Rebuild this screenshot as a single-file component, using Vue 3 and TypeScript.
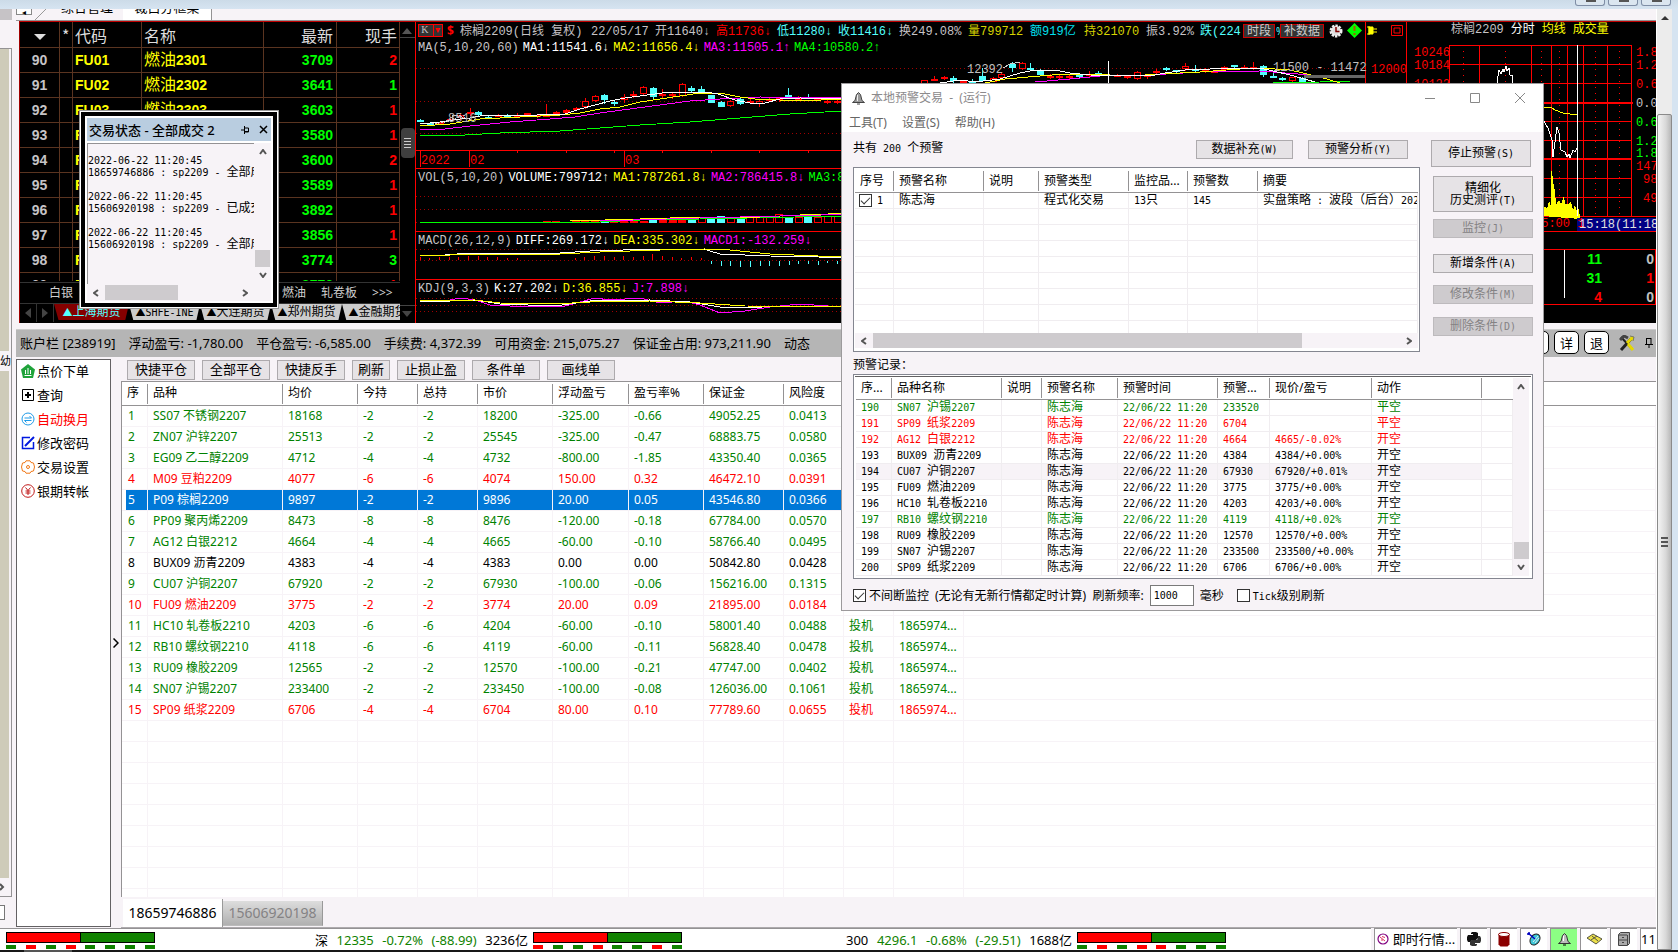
<script setup lang="ts">
import { h, ref } from 'vue'

/* Text that mixes Latin and Han: the Latin runs are monospaced */
const Mx = (props: { t: string }) =>
  h(
    'span',
    { class: 'mx' },
    (props.t.match(/[\u2e80-\uffef]+|[^\u2e80-\uffef]+/g) ?? []).map((s) =>
      /[\u2e80-\uffef]/.test(s) ? h('span', { class: 'han' }, s) : s,
    ),
  )
Mx.props = ['t']

const quotes = [
  ['90', 'FU01', '燃油', '2301', '3709', '2', 'r'],
  ['91', 'FU02', '燃油', '2302', '3641', '1', 'g'],
  ['92', 'FU03', '燃油', '2303', '3603', '1', 'r'],
  ['93', 'F', '', '', '3580', '1', 'r'],
  ['94', 'F', '', '', '3600', '2', 'r'],
  ['95', 'F', '', '', '3589', '1', 'r'],
  ['96', 'F', '', '', '3892', '1', 'r'],
  ['97', 'F', '', '', '3856', '1', 'r'],
  ['98', 'F', '', '', '3774', '3', 'g'],
  ['99', 'F', '', '', '3776', '1', 'r'],
]

const barItems = [
  ['棕榈2209(日线 复权)', 'gray'],
  ['22/05/17', 'gray'],
  ['开11640↓', 'gray'],
  ['高11736↓', 'red'],
  ['低11280↓', 'cyan'],
  ['收11416↓', 'cyan'],
  ['换249.08%', 'gray'],
  ['量799712', 'gold'],
  ['额919亿', 'sky'],
  ['持321070', 'gold'],
  ['振3.92%', 'gray'],
  ['跌(224', 'cyan'],
]

const legends = [
  { cls: 'p-main', items: [['MA(5,10,20,60)', 'gray'], ['MA1:11541.6↓', 'white'], ['MA2:11656.4↓', 'yellow'], ['MA3:11505.1↑', 'magenta'], ['MA4:10580.2↑', 'lime']] },
  { cls: 'p-vol', items: [['VOL(5,10,20)', 'gray'], ['VOLUME:799712↑', 'white'], ['MA1:787261.8↓', 'yellow'], ['MA2:786415.8↓', 'magenta'], ['MA3:8', 'lime']] },
  { cls: 'p-macd', items: [['MACD(26,12,9)', 'gray'], ['DIFF:269.172↓', 'white'], ['DEA:335.302↓', 'yellow'], ['MACD1:-132.259↓', 'magenta']] },
  { cls: 'p-kdj', items: [['KDJ(9,3,3)', 'gray'], ['K:27.202↓', 'white'], ['D:36.855↓', 'yellow'], ['J:7.898↓', 'magenta']] },
]

/* candle: x, body top, body bottom, wick top, wick bottom, kind (c cyan, s red solid, h red hollow) */
type Candle = [number, number, number, number, number, string]
const candles: Candle[] = [
  [420, 120, 122, 119, 122, 'c'], [430, 123, 124, 122, 125, 'c'], [440, 122, 123, 121, 124, 's'], [450, 119, 121, 117, 122, 's'],
  [460, 115, 118, 114, 120, 'h'], [470, 112, 114, 108, 116, 's'], [478, 112, 115, 111, 117, 'c'], [488, 117, 118, 116, 119, 'c'],
  [498, 115, 116, 114, 117, 's'], [507, 116, 117, 114, 118, 'c'], [517, 115, 116, 113, 117, 's'], [527, 113, 115, 113, 116, 's'],
  [537, 115, 116, 114, 118, 's'], [546, 115, 116, 104, 116, 's'], [556, 112, 115, 111, 115, 's'], [566, 110, 113, 109, 114, 's'],
  [576, 108, 109, 107, 110, 's'], [585, 101, 107, 98, 109, 'h'], [595, 96, 101, 95, 102, 'h'], [604, 95, 100, 94, 104, 'c'],
  [614, 102, 103, 100, 106, 'c'], [624, 97, 100, 94, 103, 'h'], [633, 94, 95, 91, 98, 's'], [643, 87, 94, 86, 95, 'h'],
  [653, 88, 97, 87, 100, 'c'], [662, 94, 95, 89, 98, 's'], [672, 94, 95, 92, 99, 's'], [682, 84, 96, 83, 97, 'h'],
  [691, 88, 91, 86, 93, 'c'], [701, 89, 93, 86, 94, 'c'], [711, 95, 103, 95, 103, 'c'], [721, 102, 107, 101, 107, 'c'],
  [730, 101, 106, 100, 107, 'h'], [740, 99, 104, 98, 105, 'c'], [750, 101, 102, 98, 104, 's'], [759, 101, 104, 100, 107, 'h'],
  [769, 99, 101, 98, 102, 's'], [779, 98, 99, 97, 102, 's'], [788, 95, 97, 88, 98, 'c'], [798, 98, 99, 96, 100, 's'],
  [808, 97, 98, 94, 99, 'c'], [817, 99, 100, 98, 101, 's'], [827, 101, 102, 99, 104, 's'], [837, 101, 102, 99, 104, 's'],
  [924, 80, 84, 80, 84, 'h'], [934, 79, 80, 76, 81, 's'], [944, 77, 79, 76, 80, 's'], [953, 78, 81, 76, 83, 'c'],
  [963, 81, 82, 80, 84, 's'], [972, 81, 82, 79, 83, 'c'], [982, 76, 81, 68, 82, 'c'], [993, 78, 82, 77, 82, 'h'],
  [1001, 74, 78, 73, 80, 'h'], [1012, 64, 68, 62, 72, 'c'], [1022, 63, 69, 62, 70, 'h'], [1030, 68, 70, 63, 71, 'c'],
  [1040, 71, 75, 69, 76, 'c'], [1050, 76, 77, 74, 79, 's'], [1059, 76, 77, 74, 79, 's'], [1069, 76, 77, 74, 79, 's'],
  [1079, 75, 77, 74, 78, 'c'], [1089, 74, 75, 71, 78, 's'], [1098, 73, 74, 71, 76, 'c'], [1117, 75, 76, 74, 77, 's'],
  [1127, 76, 77, 75, 79, 's'], [1137, 72, 79, 71, 80, 'h'], [1147, 75, 76, 74, 79, 's'], [1156, 71, 72, 69, 74, 's'],
  [1166, 68, 70, 67, 71, 'c'], [1176, 70, 72, 70, 73, 'c'], [1185, 66, 69, 63, 71, 'h'], [1195, 69, 71, 65, 72, 'c'],
  [1205, 70, 71, 68, 73, 's'], [1214, 71, 72, 70, 73, 's'], [1224, 67, 70, 66, 71, 'h'], [1234, 65, 67, 65, 68, 'c'],
  [1244, 67, 68, 65, 69, 's'], [1253, 67, 68, 62, 70, 's'], [1263, 66, 75, 65, 77, 'c'], [1273, 76, 77, 73, 78, 'c'],
  [1282, 78, 80, 77, 81, 'c'], [1292, 77, 81, 77, 83, 'h'], [1302, 78, 83, 77, 83, 'c'],
]
const volBars = Array.from({ length: 31 }, (_, i) => {
  const hs = [1, 1, 0, 1, 2, 2, 2, 1, 2, 2, 1, 4, 2, 2, 4, 4, 5, 4, 6, 5, 4, 5, 5, 6, 8, 5, 5, 8, 5, 6, 6]
  const cyan = [6, 11, 15, 17, 18, 20, 25, 27].includes(i)
  return { x: 543 + i * 9.7, h: hs[i], cyan, solid: cyan || i < 15 }
})
const macdUp = [3, 2, 3, 3, 3, 4, 4, 3, 3, 2, 2, 0, 0, 0, 0, 0, 2, 3, 4, 4, 3, 4, 3, 4, 6, 4, 3, 2, 3, 2]
const macdDown = [3, 5, 5, 6, 6, 5, 5, 5, 4, 3, 3, 4, 2, 3, 3]

const markets = ['上海期货', 'SHFE-INE', '大连期货', '郑州期货', '金融期货']
const rightScale = [
  ['1.8', 'red', 56], ['1.2', 'red', 69], ['0.6', 'red', 88], ['0.0', 'gray', 107], ['0.6', 'lime', 126],
  ['1.2', 'lime', 145], ['1.8', 'lime', 157], ['147', 'red', 170], ['98', 'red', 183], ['49', 'red', 202],
]

const account = ['账户栏 [238919]', '浮动盈亏: -1,780.00', '平仓盈亏: -6,585.00', '手续费: 4,372.39', '可用资金: 215,075.27', '保证金占用: 973,211.90', '动态']
const actions = ['快捷平仓', '全部平仓', '快捷反手', '刷新', '止损止盈', '条件单', '画线单']
const sideItems = ['点价下单', '查询', '自动换月', '修改密码', '交易设置', '银期转帐']

const posHead = ['序', '品种', '均价', '今持', '总持', '市价', '浮动盈亏', '盈亏率%', '保证金', '风险度', '', '', '']
const positions = [
  ['1', 'SS07 不锈钢2207', '18168', '-2', '-2', '18200', '-325.00', '-0.66', '49052.25', '0.0413'],
  ['2', 'ZN07 沪锌2207', '25513', '-2', '-2', '25545', '-325.00', '-0.47', '68883.75', '0.0580'],
  ['3', 'EG09 乙二醇2209', '4712', '-4', '-4', '4732', '-800.00', '-1.85', '43350.40', '0.0365'],
  ['4', 'M09 豆粕2209', '4077', '-6', '-6', '4074', '150.00', '0.32', '46472.10', '0.0391'],
  ['5', 'P09 棕榈2209', '9897', '-2', '-2', '9896', '20.00', '0.05', '43546.80', '0.0366'],
  ['6', 'PP09 聚丙烯2209', '8473', '-8', '-8', '8476', '-120.00', '-0.18', '67784.00', '0.0570'],
  ['7', 'AG12 白银2212', '4664', '-4', '-4', '4665', '-60.00', '-0.10', '58766.40', '0.0495'],
  ['8', 'BUX09 沥青2209', '4383', '-4', '-4', '4383', '0.00', '0.00', '50842.80', '0.0428'],
  ['9', 'CU07 沪铜2207', '67920', '-2', '-2', '67930', '-100.00', '-0.06', '156216.00', '0.1315'],
  ['10', 'FU09 燃油2209', '3775', '-2', '-2', '3774', '20.00', '0.09', '21895.00', '0.0184'],
  ['11', 'HC10 轧卷板2210', '4203', '-6', '-6', '4204', '-60.00', '-0.10', '58001.40', '0.0488', '投机', '1865974...'],
  ['12', 'RB10 螺纹钢2210', '4118', '-6', '-6', '4119', '-60.00', '-0.11', '56828.40', '0.0478', '投机', '1865974...'],
  ['13', 'RU09 橡胶2209', '12565', '-2', '-2', '12570', '-100.00', '-0.21', '47747.00', '0.0402', '投机', '1865974...'],
  ['14', 'SN07 沪锡2207', '233400', '-2', '-2', '233450', '-100.00', '-0.08', '126036.00', '0.1061', '投机', '1865974...'],
  ['15', 'SP09 纸浆2209', '6706', '-4', '-4', '6704', '80.00', '0.10', '77789.60', '0.0655', '投机', '1865974...'],
]
const selected = ref(4)
const tone = (r: string[]) => (r[6].startsWith('-') ? 'down' : r[6] === '0.00' ? 'flat' : 'up')

const alertHead = ['序号', '预警名称', '说明', '预警类型', '监控品...', '预警数', '摘要']
const recHead = ['序...', '品种名称', '说明', '预警名称', '预警时间', '预警...', '现价/盈亏', '动作', '']
const records = [
  ['190', 'SN07 沪锡2207', '233520', '', '平空', 'down'],
  ['191', 'SP09 纸浆2209', '6704', '', '平空', 'up'],
  ['192', 'AG12 白银2212', '4664', '4665/-0.02%', '开空', 'up'],
  ['193', 'BUX09 沥青2209', '4384', '4384/+0.00%', '开空', 'flat'],
  ['194', 'CU07 沪铜2207', '67930', '67920/+0.01%', '开空', 'flat picked'],
  ['195', 'FU09 燃油2209', '3775', '3775/+0.00%', '开空', 'flat'],
  ['196', 'HC10 轧卷板2210', '4203', '4203/+0.00%', '开空', 'flat'],
  ['197', 'RB10 螺纹钢2210', '4119', '4118/+0.02%', '开空', 'down'],
  ['198', 'RU09 橡胶2209', '12570', '12570/+0.00%', '开空', 'flat'],
  ['199', 'SN07 沪锡2207', '233500', '233500/+0.00%', '开空', 'flat'],
  ['200', 'SP09 纸浆2209', '6706', '6706/+0.00%', '开空', 'flat'],
]
const logs = [
  ['2022-06-22 11:20:45', '18659746886 : sp2209 - 全部成交'],
  ['2022-06-22 11:20:45', '15606920198 : sp2209 - 已成交'],
  ['2022-06-22 11:20:45', '15606920198 : sp2209 - 全部成交'],
]
const meters = ['grgrgggg', 'rggrggrg', 'grgrrggg']
const nonstop = ref(true)
const tick = ref(false)
const row1 = ref(true)
const freq = ref('1000')
</script>

<template>
  <div class="desktop">
    <header class="titlebar"><i></i><i></i><i></i></header>
    <div class="body">
      <aside class="dock">
        <div class="dock-top"></div>
        <div class="dock-a"></div>
        <div class="dock-label">幼</div>
        <div class="dock-b"></div>
        <div class="dock-c"><svg width="6" height="8" viewBox="0 0 6 8"><path d="M0 1l3 3-3 3" fill="none" stroke="#555" stroke-width="2" /></svg></div>
        <div class="dock-d"></div>
      </aside>

      <main class="center">
        <nav class="pagetabs">
          <button class="back">◂</button>
          <svg class="slant" width="12" height="11" viewBox="0 0 12 11"><path d="M0 11L11 0" stroke="#999" fill="none" /></svg>
          <button class="ptab">综合管理</button>
          <button class="ptab on">裁白分框架</button>
          <span class="rule"></span>
        </nav>

        <section class="market">
          <div class="quote">
            <div class="qwrap">
              <table>
                <colgroup><col class="q1" /><col class="q2" /><col class="q3" /><col class="q4" /><col class="q5" /><col class="q6" /></colgroup>
                <thead>
                  <tr>
                    <th class="mid"><svg width="12" height="6" viewBox="0 0 12 6"><path d="M0 0h12L6 6z" fill="#ddd" /></svg></th>
                    <th>*</th><th>代码</th><th>名称</th><th class="num">最新</th><th class="num">现手</th>
                  </tr>
                </thead>
                <tbody>
                  <tr v-for="q in quotes" :key="q[0]">
                    <td class="mid gray">{{ q[0] }}</td><td></td><td class="yellow">{{ q[1] }}</td>
                    <td class="yellow"><span class="cn">{{ q[2] }}</span>{{ q[3] }}</td>
                    <td class="num lime">{{ q[4] }}</td><td class="num" :class="q[6] === 'r' ? 'red' : 'lime'">{{ q[5] }}</td>
                  </tr>
                </tbody>
              </table>
            </div>
            <div class="blocks"><span class="b1">白银</span><span>燃油</span><span>轧卷板</span><span>&gt;&gt;&gt;</span></div>
            <div class="mtabs">
              <button class="arr" aria-label="左"><svg width="6" height="10" viewBox="0 0 6 10"><path d="M6 0v10L0 5z" fill="#444" /></svg></button>
              <button class="arr" aria-label="右"><svg width="6" height="10" viewBox="0 0 6 10"><path d="M0 0v10l6-5z" fill="#444" /></svg></button>
              <button v-for="(m, i) in markets" :key="m" class="mtab" :class="{ on: i === 0 }">▲<Mx :t="m" /></button>
            </div>
          </div>
          <div class="qscroll">
            <span class="up"><svg width="10" height="6" viewBox="0 0 10 6"><path d="M0 6h10L5 0z" fill="#555" /></svg></span>
            <span class="thumb"><i></i><i></i><i></i><i></i></span>
            <span class="dn"><svg width="10" height="6" viewBox="0 0 10 6"><path d="M0 0h10L5 6z" fill="#444" /></svg></span>
          </div>

          <div class="kline">
            <svg class="plot" viewBox="416 22 991 300" preserveAspectRatio="xMinYMin slice" shape-rendering="crispEdges">
              <g stroke="#a00000" stroke-dasharray="1 3">
                <path d="M416 68.5H1365M416 101.5H1365M416 133.5H1365M416 196.5H1365M416 209.5H1365M416 222.5H1365M416 249.5H1365M416 260.5H1365M416 298.5H1365M416 305.5H1365M416 311.5H1365" />
              </g>
              <g v-for="c in candles" :key="c[0]" :stroke="c[5] === 'c' ? '#52ffff' : '#ff0000'">
                <path v-if="c[5] === 'h'" :d="`M${c[0] + 0.5} ${c[3]}V${c[1]}M${c[0] + 0.5} ${c[2]}V${c[4]}`" />
                <path v-else :d="`M${c[0] + 0.5} ${c[3]}V${c[4]}`" />
                <rect :x="c[0] - 2.5" :y="c[1] + 0.5" width="6" :height="Math.max(c[2] - c[1] - 1, 0.5)" :fill="c[5] === 'h' ? '#000' : c[5] === 'c' ? '#52ffff' : '#ff0000'" />
              </g>
              <g v-for="v in volBars" :key="v.x">
                <rect :x="v.x" :y="222 - v.h" width="7" :height="v.h" :stroke="v.cyan ? '#52ffff' : '#ff0000'" :fill="v.cyan ? '#52ffff' : v.solid ? '#ff0000' : '#000'" />
              </g>
              <path v-for="(m, i) in macdUp" :key="'u' + i" :d="`M${420 + i * 9.7} 260v${-m}`" stroke="#ff0000" />
              <path v-for="(m, i) in macdDown" :key="'d' + i" :d="`M${711.5 + i * 9.7} 261v${m}`" stroke="#52ffff" />
              <g fill="none">
                <path stroke="#00ff00" d="M420 135H465L500 133L560 131L600 128L640 125L690 122L740 118L790 114L842 111M1250 83.5L1320 82L1350 81" />
                <path stroke="#ff00ff" d="M420 130L445 129L470 126L510 122L550 119L575 117L600 113L630 109L660 105L690 101L720 99L760 97L842 98M1035 82L1070 79L1100 76L1150 75L1200 72L1260 71L1310 75L1350 78" />
                <path stroke="#ffff00" d="M420 126L450 124L480 119L520 117L560 115L580 113L600 109L620 107L640 102L660 99L680 96L700 93H720L740 97L755 99L780 100L800 101L842 99M985 83L1005 79L1040 76L1065 74H1090L1130 76L1160 74L1200 72L1240 69L1260 68L1290 70L1320 77L1340 83" />
                <path stroke="#ffffff" d="M420 124L440 122L460 119L470 118L480 116L490 115L510 116L565 114L580 109L595 105L610 101L625 98L640 96L655 94L670 92L705 92L718 94L735 100L750 103H765L780 99L800 98L842 99M940 83L960 80L975 82L1000 79L1020 73L1035 70H1055L1070 73L1090 75L1150 76L1165 73L1185 70L1235 68L1260 68L1290 75L1315 82" />
                <path stroke="#00ff00" d="M420 222H600L640 220L700 219L842 216" />
                <path stroke="#ffff00" d="M570 221L640 219L700 217L760 217L800 215L842 213.5" />
                <path stroke="#ff00ff" d="M600 221L700 218L780 216L842 214.5" />
                <path stroke="#ffffff" d="M420 255L445 255L470 253H560L590 251L640 249.5H705L720 254L745 255L770 256L842 257.5" />
                <path stroke="#ffff00" d="M420 256L450 255L480 254H560L600 252L660 250L705 249L730 250L770 254L842 257" />
                <path stroke="#ff00ff" d="M420 301L440 302L460 298L475 300L490 305L510 306H565L580 302L595 298L610 300L640 298L660 303L685 301L700 305L720 313L745 311L770 307L800 304L842 307" />
                <path stroke="#ffffff" d="M420 301L450 301L475 300L500 304L555 306L590 301L650 300L690 302L720 307L745 308L780 306L842 306" />
                <path stroke="#ffff00" d="M420 300.5L475 300L500 303L555 304L590 302L650 301L700 303L745 306L842 306.5" />
                <path stroke="#cccccc" stroke-width="1" stroke-dasharray="2 1" d="M432 124L452 121L452 115H462M446 121L466 115M455 115L472 120" />
                <path stroke="#cccccc" d="M1003 68L1010 64L1020 62" />
              </g>
              <rect x="1304" y="75" width="61" height="3" fill="#666" />
              <path d="M1108.5 61V83" stroke="#fff" />
              <path d="M416 150.5H1365M416 168.5H1407M416 231.5H1407M416 279.5H1407M1365.5 22V322M1406.5 22V322" stroke="#ff0000" fill="none" />
              <path d="M420.5 151V167M469.5 151V167M624.5 151V167M517.5 151v2M566.5 151v2M614.5 151v2M662.5 151v2M711.5 151v2M759.5 151v2M808.5 151v2" stroke="#ff0000" />
              <g class="svgtext">
                <text x="421" y="164" fill="#ff0000">2022</text><text x="470" y="164" fill="#ff0000">02</text><text x="625" y="164" fill="#ff0000">03</text>
                <text x="448" y="122" fill="#b5b5b5">8516</text>
                <text x="967" y="73" fill="#c0c0c0">12392</text><text x="1273" y="71" fill="#c0c0c0">11500 - 11472</text>
                <text x="1371" y="73" fill="#ff0000">12000</text>
              </g>
            </svg>
            <div class="khead">
              <button class="kbox">K<i>▾</i></button><span class="red dollar">$</span>
              <span v-for="b in barItems" :key="b[0]" :class="b[1]"><Mx :t="b[0]" class="big" /></span>
              <button class="kbtn">时段</button>
              <span class="cyan pc">%</span>
              <button class="kbtn">补数据</button>
              <svg width="14" height="14" viewBox="0 0 14 14"><circle cx="7" cy="7" r="5" fill="#ddd" stroke="#eee" stroke-width="3" stroke-dasharray="2.200 1" /><path d="M7 3v4.500h3.500" stroke="#800000" stroke-width="1.500" fill="none" /></svg>
              <svg width="15" height="15" viewBox="0 0 15 15"><path d="M7.500 0L15 7.500 7.500 15 0 7.500z" fill="#00ff00" /><path d="M7.500 3v5M7.500 10v2" stroke="#a06000" stroke-width="2" /></svg>
              <svg width="10" height="10" viewBox="0 0 10 10"><path d="M0 1h2M0 8h2M2 0v9M2 1h4v7H2z" fill="#ffff00" stroke="#ffff00" /><path d="M6 3h4M6 6h4" stroke="#ffff00" /></svg>
              <svg width="12" height="11" viewBox="0 0 12 11"><path d="M.5.5h11v10H.5zM3 3h6v5H3z" fill="none" stroke="#ff0000" /></svg>
            </div>
            <div v-for="l in legends" :key="l.cls" class="legend" :class="l.cls">
              <span v-for="i in l.items" :key="i[0]" :class="i[1]">{{ i[0] }}</span>
            </div>
          </div>

          <div class="intraday">
            <svg class="plot" viewBox="1407 22 249 300" preserveAspectRatio="xMinYMin slice" shape-rendering="crispEdges">
              <g stroke="#ff0000" fill="none">
                <path d="M1449 45.5H1631M1449 64.5H1631M1449 83.5H1631M1449 121.5H1631M1449 140.5H1631M1449 178.5H1631M1449 197.5H1631M1407 216.5H1656M1407 231.5H1656" />
                <path stroke-width="2" d="M1449 102.5H1633M1449 159H1631" />
                <path d="M1449.5 45V216M1479.5 45V216M1531.5 45V216M1551.5 45V216M1567.5 45V216M1583.5 45V216M1607.5 45V216M1631.5 45V216M1407 249.5H1655.5V304.5H1407" />
                <path stroke-dasharray="1 5" d="M1463.5 45V216M1505.5 45V216M1541.5 45V216M1559.5 45V216M1595.5 45V216M1619.5 45V216" />
              </g>
              <path d="M1543 216V210l2-4 2 3 2-8 2 5V171h1l1 10 2 10 1 14 3-5 2 4 3-8 1 8 3 0 3-2 2 8 2-5 2 7 2-4 1 11z" fill="#ffff00" />
              <path fill="none" stroke="#fff" d="M1497 83l2-13 2 4 2-5 1 3 2-6 1 5 2-3 1 7 2 0 0 8M1543 120l5 8 4 12 1 17 2-15 2-15 2 6 2 17 2 1 2 1 2 5 2-3 1 4 3-8 2 2 2-4" />
              <path fill="none" stroke="#ffff00" d="M1543 107h8l4 3 8 3 14 2" />
              <path d="M1577.5 45V216M1564.5 250V298" stroke="#fff" stroke-width="1" />
              <rect x="1577" y="218" width="79" height="13" fill="#000084" />
              <g class="svgtext">
                <text x="1414" y="56" fill="#ff0000">10246</text><text x="1414" y="69" fill="#ff0000">10184</text><text x="1414" y="88" fill="#ff0000">10122</text>
                <text v-for="s in rightScale" :key="s[2]" :x="(s[0] as string).length === 2 ? 1643 : 1636" :y="s[2]" :class="s[1]">{{ s[0] }}</text>
                <text x="1534" y="227" fill="#ff0000">15:00 1</text><text x="1579" y="228" fill="#e0e0e0">15:18(11:18</text>
              </g>
              <g class="svgbold" text-anchor="end">
                <text x="1602" y="264" fill="#00ff00">11</text><text x="1602" y="283" fill="#00ff00">31</text><text x="1602" y="302" fill="#ff0000">4</text>
                <text x="1654" y="264" fill="#c0c0c0">0</text><text x="1654" y="283" fill="#ff0000">1</text><text x="1654" y="302" fill="#c0c0c0">0</text>
              </g>
            </svg>
            <div class="ihead"><span class="gray"><Mx t="棕榈2209" class="big" /></span><span class="white">分时</span><span class="yellow">均线</span><span class="yellow">成交量</span></div>
          </div>
        </section>

        <div class="account">
          <span v-for="a in account" :key="a">{{ a }}</span>
          <div class="atools">
            <button class="abtn">设</button><button class="abtn">详</button><button class="abtn">退</button>
            <svg width="16" height="16" viewBox="0 0 16 16"><path d="M2 2l11 12" stroke="#222" stroke-width="2" /><path d="M1 5l4-4 4 2" stroke="#444" stroke-width="3" fill="none" /><path d="M2 15L12 4" stroke="#222" stroke-width="3" /><path d="M8 8l5-5M9 9l5 6" stroke="#e6d800" stroke-width="3" /><path d="M11 1l4 1-1 4" fill="#e6d800" stroke="#776" /></svg>
            <svg width="8" height="10" viewBox="0 0 8 10"><path d="M1.500 0v6M0 6.500h8M6 0v6M1 .5h5M4 7v3" stroke="#000" fill="none" /></svg>
          </div>
        </div>

        <section class="trade">
          <nav class="side">
            <button v-for="(s, i) in sideItems" :key="s" :class="{ hot: i === 2 }">
              <svg width="14" height="14" viewBox="0 0 14 14" fill="none">
                <g v-if="i === 0"><path d="M7 0l7 5.500-2 8.500H2L0 5.500z" fill="#1fa33a" /><path d="M4.500 6v4M7 4v6M9.500 6v4M3.500 11.500h7" stroke="#fff" /></g>
                <g v-else-if="i === 1" stroke="#000"><path d="M1.500 1.500h11v11h-11z" /><path d="M7 4v6M4 7h6" stroke-width="2" /></g>
                <g v-else-if="i === 2" stroke="#1e9be8"><circle cx="7" cy="7" r="6" /><path d="M3.500 6h7L8.500 4M10.500 8.500h-7l2 2" /></g>
                <g v-else-if="i === 3" stroke="#0018e0"><path d="M9 1.500H1.500v11h11V6" stroke-width="1.500" /><path d="M4 10l9-9" stroke-width="2" /></g>
                <g v-else-if="i === 4" stroke="#f07818"><path d="M5 .8h4l1 1.700 2.500.5 1 4-1 4-2.500.5-1 1.700H5l-1-1.700-2.500-.5-1-4 1-4L4 2.500z" /><circle cx="7" cy="7" r="1.500" /></g>
                <g v-else stroke="#c01818"><circle cx="7" cy="7" r="6.300" /><path d="M4.500 3.500L7 6.500l2.500-3M7 6.500V11M4.500 7h5M4.500 9h5" /></g>
              </svg>{{ s }}
            </button>
          </nav>
          <button class="fold" aria-label="展开"><svg width="6" height="10" viewBox="0 0 6 10"><path d="M.5.5L5 5 .5 9.500" fill="none" stroke="#000" stroke-width="1.500" /></svg></button>
          <div class="pos">
            <div class="toolbar"><button v-for="a in actions" :key="a" :class="{ narrow: a === '刷新' }">{{ a }}</button></div>
            <div class="posgrid">
              <table>
                <colgroup><col v-for="n in 13" :key="n" :class="'c' + n" /></colgroup>
                <thead><tr><th v-for="(t, i) in posHead" :key="i">{{ t }}</th></tr></thead>
                <tbody>
                  <tr v-for="(r, i) in positions" :key="r[0]" :class="[tone(r), { sel: i === selected }]" @click="selected = i">
                    <td v-for="n in 13" :key="n">{{ r[n - 1] }}</td>
                  </tr>
                  <tr v-for="e in 20" :key="'e' + e"><td v-for="n in 13" :key="n"></td></tr>
                </tbody>
              </table>
            </div>
            <div class="acctabs"><button class="on">18659746886</button><button>15606920198</button></div>
          </div>
        </section>

        <footer class="status">
          <div class="sbar">
            <template v-for="(m, i) in meters" :key="m">
              <div v-if="i === 1" class="idx i1"><span>深</span><span class="dg">12335</span><span class="dg">-0.72%</span><span class="dg">(-88.99)</span><span>3236亿</span></div>
              <div v-if="i === 2" class="idx i2"><span>300</span><span class="dg">4296.1</span><span class="dg">-0.68%</span><span class="dg">(-29.51)</span><span>1688亿</span></div>
              <div class="meter"><div class="bar"><i class="r"></i><i class="g"></i></div><div class="dash"><i v-for="(c, k) in m" :key="k" :class="c"></i></div></div>
            </template>
          </div>
          <div class="sc live"><svg width="12" height="12" viewBox="0 0 12 12"><circle cx="6" cy="6" r="5" fill="#fff" stroke="#800080" stroke-width="1.200" /><path d="M3 4l5 4M5 3.500l3 1M4 7h2" stroke="#e03060" /></svg>即时行情...</div>
          <div class="sc"><svg width="14" height="14" viewBox="0 0 14 14"><path d="M5 0h4l2 1v5L9 8H5L4 10H1L0 8V5l1-2h5V2H4V1z" fill="#111" /><path d="M13 4l1 2v3l-1 2H8v1h2v1l-1 1H5l-2-1V9l2-1h5l1-2V4z" fill="#333" /></svg></div>
          <div class="sc"><svg width="12" height="15" viewBox="0 0 12 15"><path d="M.5 2.500v10l2 2h7l2-2v-10z" fill="#8b0000" /><ellipse cx="6" cy="2.500" rx="5.500" ry="2" fill="#fff" stroke="#8b0000" /></svg></div>
          <div class="sc"><svg width="14" height="14" viewBox="0 0 14 14"><ellipse cx="8" cy="7.500" rx="4.500" ry="6" transform="rotate(35 8 7.500)" fill="#3ec8d8" stroke="#222" /><path d="M6 10l5-6M8 11l4-5" stroke="#e8e8e8" /><path d="M1 1l7 6M1 1v2M1 1h2" stroke="#0000c0" stroke-width="1.500" /></svg></div>
          <div class="sc lit"><svg width="13" height="13" viewBox="0 0 13 13"><path d="M6.500.5l2 2 1.500 6 2.500 2H.5l2.500-2 1.500-6z" fill="#bbb" stroke="#333" /><path d="M5.500 3v5" stroke="#fff" /><path d="M5 12h3" stroke="#000" /></svg></div>
          <div class="sc"><svg width="15" height="12" viewBox="0 0 15 12"><path d="M0 5l6-4 9 5-6 5z" fill="#ece04a" stroke="#554" /><path d="M4 7l6-4M5 3l6 5" stroke="#554" /></svg></div>
          <div class="sc"><svg width="12" height="14" viewBox="0 0 12 14"><path d="M.5 2.500l2-2h9v11l-2 2h-9z" fill="#aaa" stroke="#444" /><path d="M9.500 3v10M1 3h8M1 8h8M4 5.500h2M4 10.500h2" stroke="#444" /></svg></div>
          <div class="sc last">11</div>
        </footer>
      </main>

      <aside class="vscroll">
        <div class="track"><svg width="8" height="4" viewBox="0 0 8 4"><path d="M0 4h8L4 0z" fill="#333" /></svg></div>
        <div class="vthumb"><i></i><i></i><i></i></div>
      </aside>
    </div>
    <div class="taskbar"><i></i></div>

    <section class="win trades">
      <header>交易状态 - 全部成交 2<span class="sp"></span>
        <svg width="8" height="8" viewBox="0 0 8 8"><path d="M0 4h3M3.500 0v8M4 2h3.500v4H4M4 5.500h4" stroke="#000" fill="none" /></svg>
        <button aria-label="关闭"><svg width="9" height="9" viewBox="0 0 9 9"><path d="M1 1l7 7M8 1L1 8" stroke="#000" stroke-width="1.500" /></svg></button>
      </header>
      <div class="tbody">
        <div class="log"><div v-for="(l, i) in logs" :key="i"><p><Mx :t="l[0]" /></p><p><Mx :t="l[1]" /></p></div></div>
        <div class="sv"><svg width="8" height="6" viewBox="0 0 8 6"><path d="M1 5l3-4 3 4" fill="none" stroke="#555" stroke-width="2" /></svg><span class="sp"></span><i></i><svg width="8" height="6" viewBox="0 0 8 6"><path d="M1 1l3 4 3-4" fill="none" stroke="#555" stroke-width="2" /></svg></div>
        <div class="sh"><svg width="6" height="8" viewBox="0 0 6 8"><path d="M5 1L1 4l4 3" fill="none" stroke="#555" stroke-width="2" /></svg><i></i><span class="sp"></span><svg width="6" height="8" viewBox="0 0 6 8"><path d="M1 1l4 3-4 3" fill="none" stroke="#555" stroke-width="2" /></svg></div>
      </div>
    </section>

    <section class="win dialog">
      <header>
        <svg width="13" height="13" viewBox="0 0 13 13"><path d="M6.500.5l2 2 1.500 6 2.500 2H.5l2.500-2 1.500-6z" fill="#999" stroke="#444" /><path d="M5.500 3v6" stroke="#eee" /><path d="M5 12h3" stroke="#444" /></svg>
        <h1>本地预警交易&nbsp; -&nbsp; (运行)</h1>
        <button aria-label="最小化"><svg width="10" height="10" viewBox="0 0 10 10"><path d="M0 5.500h10" stroke="#888" /></svg></button>
        <button aria-label="最大化"><svg width="10" height="10" viewBox="0 0 10 10"><path d="M.5.5h9v9h-9z" stroke="#888" fill="none" /></svg></button>
        <button aria-label="关闭"><svg width="10" height="10" viewBox="0 0 10 10"><path d="M0 0l10 10M10 0L0 10" stroke="#888" /></svg></button>
      </header>
      <nav class="menu"><button>工具(T)</button><button>设置(S)</button><button>帮助(H)</button></nav>
      <div class="upper">
        <div class="ul">
          <div class="count"><span><Mx t="共有 200 个预警" /></span><span class="sp"></span><button class="btn"><Mx t="数据补充(W)" /></button><button class="btn b100"><Mx t="预警分析(Y)" /></button></div>
          <div class="list l1">
            <div class="lwrap">
              <table>
                <colgroup><col v-for="n in 7" :key="n" :class="'a' + n" /></colgroup>
                <thead><tr><th v-for="t in alertHead" :key="t">{{ t }}</th></tr></thead>
                <tbody>
                  <tr><td class="ck"><label><input v-model="row1" type="checkbox" /><Mx t="1" /></label></td><td>陈志海</td><td></td><td>程式化交易</td><td><Mx t="13只" /></td><td><Mx t="145" /></td><td><Mx t="实盘策略 : 波段（后台）202" /></td></tr>
                  <tr v-for="e in 8" :key="e"><td v-for="n in 7" :key="n"></td></tr>
                </tbody>
              </table>
            </div>
            <div class="sh"><svg width="6" height="8" viewBox="0 0 6 8"><path d="M5 1L1 4l4 3" fill="none" stroke="#555" stroke-width="2" /></svg><i></i><svg width="6" height="8" viewBox="0 0 6 8"><path d="M1 1l4 3-4 3" fill="none" stroke="#555" stroke-width="2" /></svg></div>
          </div>
        </div>
        <div class="ur">
          <button class="btn s1"><Mx t="停止预警(S)" /></button>
          <button class="btn s2"><span>精细化</span><span><Mx t="历史测评(T)" /></span></button>
          <button class="btn s3" disabled><Mx t="监控(J)" /></button>
          <button class="btn s4"><Mx t="新增条件(A)" /></button>
          <button class="btn s5" disabled><Mx t="修改条件(M)" /></button>
          <button class="btn s6" disabled><Mx t="删除条件(D)" /></button>
        </div>
      </div>
      <div class="rlabel">预警记录：</div>
      <div class="list l2">
        <div class="lwrap">
          <table>
            <colgroup><col v-for="n in 9" :key="n" :class="'r' + n" /></colgroup>
            <thead><tr><th v-for="t in recHead" :key="t">{{ t }}</th></tr></thead>
            <tbody>
              <tr v-for="r in records" :key="r[0]" :class="r[5]">
                <td><Mx :t="r[0]" /></td><td><Mx :t="r[1]" /></td><td></td><td>陈志海</td><td><Mx t="22/06/22 11:20" /></td>
                <td><Mx :t="r[2]" /></td><td><Mx :t="r[3]" /></td><td>{{ r[4] }}</td><td></td>
              </tr>
            </tbody>
          </table>
        </div>
        <div class="sv"><svg width="8" height="6" viewBox="0 0 8 6"><path d="M1 5l3-4 3 4" fill="none" stroke="#555" stroke-width="2" /></svg><span class="sp"></span><i></i><svg width="8" height="6" viewBox="0 0 8 6"><path d="M1 1l3 4 3-4" fill="none" stroke="#555" stroke-width="2" /></svg></div>
      </div>
      <div class="opts">
        <label><input v-model="nonstop" type="checkbox" />不间断监控</label>
        <label for="freq" class="fq">(无论有无新行情都定时计算)&nbsp; 刷新频率:</label>
        <input id="freq" v-model="freq" type="text" />
        <span class="ms">毫秒</span>
        <label><input v-model="tick" type="checkbox" /><Mx t="Tick级别刷新" /></label>
      </div>
    </section>
  </div>
</template>

<style>
body { overflow: hidden; }
.mx { font-family: "DejaVu Sans Mono", "Noto Sans CJK SC", monospace; font-size: 10px; line-height: 0; white-space: pre; }
.mx .han { font-family: "Noto Sans CJK SC", sans-serif; font-size: 12px; line-height: 0; }
.mx.big { font-size: 12px; font-family: "Liberation Mono", "Noto Sans CJK SC", monospace; }
</style>

<style scoped>
* { box-sizing: border-box; }
button { font: inherit; color: inherit; background: none; border: 0; padding: 0; white-space: nowrap; }
svg { display: block; flex: none; }
table { border-collapse: separate; border-spacing: 0; table-layout: fixed; width: 100%; }
th, td { padding: 0; text-align: left; font-weight: 400; white-space: nowrap; overflow: hidden; }
.sp { flex: 1; }
.desktop { position: relative; display: flex; flex-direction: column; height: 100vh; overflow: hidden; background: #f7f3f7; color: #000; font: 12px/16px "Noto Sans", "Noto Sans CJK SC", sans-serif; }
.titlebar { flex: none; height: 9px; background: linear-gradient(#ccdbe8, #d6e4f1); display: flex; justify-content: flex-end; gap: 3px; padding-right: 7px; }
.titlebar i { width: 30px; height: 6px; border: 1px solid #7f8ea6; border-top: 0; border-radius: 0 0 3px 3px; background: linear-gradient(90deg, transparent 10px, #555 10px, #555 20px, transparent 20px) 0 0 / 100% 2px no-repeat #dbe6f0; }
.body { flex: 1; min-height: 0; display: flex; }
.taskbar { flex: none; height: 2px; background: #181818; padding-left: 24px; }
.taskbar i { display: block; width: 48px; height: 2px; background: #555; }

.dock { flex: none; width: 16px; display: flex; flex-direction: column; }
.dock-top { height: 11px; width: 12px; background: #c6c3c6; margin-bottom: 28px; }
.dock-a, .dock-b, .dock-label, .dock-c { width: 12px; border-right: 1px solid #949294; }
.dock-a { height: 303px; border-top: 1px solid #949294; }
.dock-a, .dock-b { background: linear-gradient(#cecbb9, #cecbb9) 0 0 / 9px 100% no-repeat; }
.dock-label { height: 20px; line-height: 20px; overflow: hidden; direction: rtl; font-size: 11px; }
.dock-b { flex: 1; }
.dock-c { height: 19px; border-bottom: 1px solid #949294; display: flex; align-items: center; }
.dock-d { width: 5px; height: 15px; border: 1px solid #777; border-left: 0; margin: 8px 0 30px; background: #fff; }

.center { flex: 1; min-width: 0; display: flex; flex-direction: column; }
.pagetabs { height: 12px; flex: none; display: flex; align-items: flex-end; overflow: hidden; border-bottom: 1px solid #949294; font-size: 13px; }
.back { width: 16px; height: 6px; margin-bottom: 5px; border: 1px solid #888; border-top: 0; line-height: 2px; font-size: 8px; background: #fff; }
.slant { margin-left: 3px; }
.ptab { height: 26px; line-height: 10px; width: 60px; text-align: center; margin-left: 10px; }
.ptab.on { width: 89px; background: #fff; border-right: 1px solid #949294; margin-left: 6px; }
.market { flex: none; height: 302px; display: flex; background: #000; margin-left: 3px; border-top: 1px solid #c00000; border-left: 1px solid #a00000; }

.gray { color: #c6c3c6; fill: #c6c3c6; } .white { color: #fff; } .red { color: #f00; fill: #f00; } .lime { color: #0f0; fill: #0f0; }
.yellow { color: #ff0; } .cyan { color: #52ffff; } .sky { color: #00e0f0; } .gold { color: #d6d300; } .magenta { color: #f0f; }

.quote { flex: none; width: 380px; display: flex; flex-direction: column; }
.qwrap { height: 259px; overflow: hidden; }
.quote th, .quote td { height: 25px; border-right: 1px solid #5a3420; border-bottom: 1px solid #5a3420; padding-left: 2px; font: bold 14px/22px "Liberation Sans", "Noto Sans CJK SC", sans-serif; }
.quote th, .quote .cn { font-family: "Noto Sans CJK SC", sans-serif; font-size: 16px; font-weight: 400; color: #ddd; }
.quote th { height: 26px; }
.quote .cn { color: #ff0; line-height: 0; }
.quote .num { text-align: right; padding-right: 3px; }
.quote th:last-child, .quote td:last-child { padding-right: 2px; }
.quote .mid { text-align: center; padding: 0; }
.quote .mid svg { display: inline-block; vertical-align: middle; }
.q1 { width: 40px; } .q2 { width: 13px; } .q3 { width: 69px; } .q4 { width: 122px; } .q5 { width: 73px; }
.blocks { border-top: 1px solid #333; margin-top: 1px; height: 21px; display: flex; line-height: 19px; gap: 15px; color: #d0d0d0; padding-left: 29px; }
.blocks .b1 { width: 218px; }
.mtabs { display: flex; height: 19px; overflow: hidden; border-top: 1px solid #333; color: #000; }
.arr { flex: none; width: 17px; display: flex; align-items: center; justify-content: center; border-right: 1px solid #333; }
.mtab { flex: none; width: 71px; height: 16px; line-height: 15px; background: #ccc; clip-path: polygon(0 0, 100% 0, 95% 100%, 6% 100%); overflow: hidden; font-size: 10px; }
.mtab.on { background: #840000; color: #52ffff; width: 75px; }
.qscroll { flex: none; width: 15px; display: flex; flex-direction: column; align-items: center; }
.qscroll .up { height: 16px; width: 15px; padding: 6px 2px; border-bottom: 1px solid #444; }
.qscroll .thumb { margin-top: 90px; height: 30px; width: 14px; border-radius: 4px; background: #3f3f3f; display: flex; flex-direction: column; gap: 2px; justify-content: center; align-items: center; }
.qscroll .thumb i { width: 7px; height: 1px; background: #ccc; }
.qscroll .dn { margin-top: auto; height: 18px; width: 15px; padding: 5px 2px; border-top: 1px solid #444; }

.kline { flex: 1; min-width: 0; display: grid; grid-template-rows: 17px 111px 18px 63px 48px 1fr; overflow: hidden; border-left: 1px solid #f00; }
.plot { grid-row: 1 / -1; grid-column: 1; width: 991px; height: 300px; }
.intraday .plot { width: 249px; }
.svgtext text { font: 12px "Liberation Mono", monospace; }
.svgbold text { font: bold 14px "Liberation Sans", sans-serif; }
.khead { grid-row: 1; grid-column: 1; display: grid; grid-template-columns: 29px 13px 131px 64px 61px 61px 61px 61px 69px 62px 54px 62px 54px 43px 33px 4px 49px 18px 20px 24px 1fr; align-items: center; line-height: 16px; white-space: nowrap; padding-left: 2px; }
.kbox { width: 25px; height: 13px; border: 1px solid #f00; background: #333; color: #c6c3c6; font: 10px/10px "Liberation Serif", serif; display: flex; justify-content: space-around; }
.kbox i { color: #f00; border-left: 1px solid #f00; padding-left: 1px; font-style: normal; }
.dollar { font-weight: 700; }
.kbtn { height: 14px; justify-self: start; padding: 0 3px; background: #333; border: 1px solid #c00; line-height: 12px; color: #ccc; font-size: 12px; }
.pc { overflow: hidden; font-size: 10px; }
.legend { grid-column: 1; display: flex; gap: 4px; font: 12px/17px "Liberation Mono", monospace; padding-left: 2px; height: 17px; white-space: pre; }
.p-main { grid-row: 2; margin-top: 1px; } .p-vol { grid-row: 4; margin-top: 2px; } .p-macd { grid-row: 5; margin-top: 2px; } .p-kdj { grid-row: 6; margin-top: 2px; }
.intraday { flex: none; width: 249px; display: grid; grid-template-rows: 300px; grid-template-columns: 249px; overflow: hidden; }
.ihead { grid-row: 1; grid-column: 1; display: flex; gap: 7px; padding-left: 44px; height: 14px; line-height: 13px; white-space: nowrap; }

.account { flex: none; height: 34px; border-top: 6px solid #f7f3f7; box-shadow: inset 0 1px #ccc; background: #b5b5b5; display: flex; align-items: center; gap: 13px; padding-left: 4px; padding-bottom: 1px; font-size: 13px; white-space: nowrap; }
.atools { margin-left: auto; display: flex; align-items: center; gap: 5px; padding-right: 3px; }
.atools svg { margin-left: 5px; }
.abtn { width: 25px; height: 23px; border: 1px solid #000; border-radius: 5px; background: #fff; }

.trade { flex: 1; min-height: 0; display: flex; }
.side { flex: none; width: 95px; margin: 2px 0 1px; border: 1px solid #636163; background: #fff; display: flex; flex-direction: column; font-size: 13px; padding: 0 4px; }
.side button { height: 24px; line-height: 16px; padding-bottom: 2px; display: flex; align-items: center; gap: 2px; }
.side .hot { color: #f00; }
.fold { flex: none; width: 10px; display: flex; align-items: center; justify-content: center; }
.pos { flex: 1; min-width: 0; display: flex; flex-direction: column; }
.toolbar { height: 24px; padding: 3px 0 1px 6px; display: flex; gap: 7px; }
.toolbar button { width: 68px; background: #e6e3e6; border: 1px solid #adaaad; font-size: 13px; line-height: 16px; padding-bottom: 2px; }
.toolbar .narrow { width: 38px; }
.posgrid { flex: 1; min-height: 0; overflow: hidden; background: #fff; border-top: 1px solid #949294; border-left: 1px solid #949294; }
.posgrid th { height: 24px; border-bottom: 1px solid #949294; padding-left: 5px; padding-bottom: 2px; background: linear-gradient(#949294, #949294) right 2px / 1px 20px no-repeat; }
.posgrid th:nth-last-child(-n+3) { background: none; }
.posgrid td { height: 21px; line-height: 20px; border-bottom: 1px solid #f7f3f7; border-right: 1px solid #f7f3f7; padding-left: 5px; }
.posgrid td:first-child { padding-left: 6px; }
.c1 { width: 26px; } .c2 { width: 135px; } .c3, .c6, .c8 { width: 75px; } .c4, .c5, .c10 { width: 60px; } .c7 { width: 76px; } .c9 { width: 80px; } .c11 { width: 50px; } .c12 { width: 70px; }
.down { color: #008200; } .up { color: #f00; } .flat { color: #000; }
.posgrid .sel td:not(:last-child) { background: #0078d7; color: #fff; }
.posgrid .sel td:first-child { box-shadow: inset 4px 0 #fff; }
.acctabs { flex: none; height: 31px; padding: 2px 0 1px 2px; display: flex; font-size: 14px; color: #848284; border-bottom: 1px solid #adaaad; }
.acctabs button { width: 100px; height: 25px; margin-top: 2px; border-right: 1px solid #999; border-bottom: 1px solid #bbb; background: linear-gradient(#ddd, #b0b0b0); line-height: 24px; }
.acctabs .on { height: 28px; margin: 0; background: #fff; color: #000; border-bottom: 0; }

.status { flex: none; height: 22px; display: flex; gap: 3px; margin-left: -16px; font-size: 13px; position: relative; }
.sbar, .sc { background: #fff; border-top: 1px solid #949294; }
.sbar { flex: 1; min-width: 0; display: flex; padding: 3px 0 0 6px; }
.meter { width: 149px; margin-right: 5px; display: flex; flex-direction: column; gap: 2px; }
.bar { display: flex; height: 11px; border: 1px solid #000; }
.bar i { flex: 1; } .bar .g { border-left: 1px solid #000; }
.r { background: #f00; } .g { background: #108200; }
.dash { display: flex; justify-content: space-between; height: 4px; }
.dash i { width: 10px; }
.idx { display: flex; gap: 6px; line-height: 16px; justify-content: space-between; white-space: nowrap; }
.dg { color: #108200; }
.i1 { width: 213px; margin: 0 5px 0 155px; } .i2 { width: 226px; margin: 0 5px 0 159px; }
.sc { flex: none; width: 27px; border-left: 1px solid #949294; display: flex; align-items: center; justify-content: center; overflow: hidden; padding-bottom: 1px; }
.live { width: 83px; gap: 4px; white-space: nowrap; }
.lit { background: #8cff84; }
.last { width: 16px; }

.vscroll { flex: none; width: 22px; border-left: 1px solid #fff; border-right: 6px solid #d6e4f1; background: #ececec; display: flex; flex-direction: column; }
.track { height: 105px; padding: 7px 4px; }
.vthumb { flex: 1; border: 1px solid #8a8a8a; border-radius: 2px 2px 0 0; background: linear-gradient(90deg, #f4f4f4, #d8d8d8 60%, #b8b8b8); display: flex; flex-direction: column; gap: 2px; align-items: center; justify-content: center; padding-top: 20px; }
.vthumb i { width: 7px; height: 2px; background: #555; }

.win { position: absolute; }
.trades { left: 79px; top: 110px; width: 200px; height: 199px; border: 2px solid #fff; outline: 1px solid #999; outline-offset: -1px; background: #000; padding: 4px; display: flex; flex-direction: column; }
.trades header { flex: none; height: 25px; border: 2px solid #fff; border-bottom: 0; background: #b9cde0; display: flex; align-items: center; font-size: 13px; font-weight: 500; padding: 0 3px 0 2px; gap: 10px; white-space: nowrap; }
.tbody { flex: 1; min-height: 0; border: 2px solid #fff; background: #f7f3f7; display: grid; grid-template-columns: 1fr 17px; grid-template-rows: 1fr 17px; }
.log { overflow: hidden; padding-top: 10px; white-space: nowrap; border-top: 1px solid #949294; border-left: 1px solid #949294; }
.log div { margin-bottom: 12px; }
.log p { margin: 0; font-size: 12px; line-height: 12px; height: 12px; }
.sv { display: flex; flex-direction: column; align-items: center; padding: 6px 0; gap: 5px; }
.sv i { width: 15px; height: 17px; background: #cecbce; }
.sh { display: flex; align-items: center; padding: 0 6px; gap: 6px; }
.sh i { width: 73px; height: 15px; background: #cecbce; }

.dialog { left: 841px; top: 83px; width: 703px; background: #f7f3f7; border: 1px solid #9c9a9c; font-family: "Noto Sans", "Noto Sans CJK SC", sans-serif; }
.dialog header { height: 30px; background: #fff; display: flex; align-items: center; padding: 0 18px 2px 10px; color: #8c8a8c; }
.dialog h1 { flex: 1; margin: 0 0 0 6px; font-size: 12px; line-height: 16px; font-weight: 400; }
.dialog header button { margin-left: 35px; }
.menu { height: 18px; background: #fff; display: flex; gap: 15px; padding-left: 7px; color: #666; }
.upper { display: flex; padding: 8px 10px 0 11px; gap: 11px; }
.ul { flex: 1; min-width: 0; }
.count { display: flex; gap: 15px; height: 27px; }
.btn { width: 97px; height: 19px; background: #e6e3e6; border: 1px solid #adaaad; line-height: 15px; padding-bottom: 2px; }
.btn:disabled { background: #cecbce; border-color: #bdbabd; color: #848284; }
.b100 { width: 100px; margin-right: 12px; }
.ur { width: 102px; display: flex; flex-direction: column; align-items: flex-end; }
.ur .btn { width: 100px; flex: none; }
.ur .s1 { height: 27px; align-self: flex-start; }
.ur .s2 { height: 36px; margin: 9px 0 7px; display: flex; flex-direction: column; align-items: center; justify-content: center; line-height: 12px; padding: 0; }
.s4 { margin-top: 16px; } .s5 { margin-top: 12px; } .s6 { margin-top: 13px; }
.list { background: #fff; border: 1px solid #848690; }
.list th { height: 22px; border-bottom: 1px solid #949294; padding: 0 0 2px 5px; background: linear-gradient(#949294, #949294) right 0 / 1px 20px no-repeat; }
.list td { height: 16px; line-height: 14px; vertical-align: top; border-right: 1px solid #f0edf0; border-bottom: 1px solid #f0edf0; padding-left: 5px; }
.list th:last-child { background: none; }
.l1 { height: 185px; padding: 3px 1px 1px; display: flex; flex-direction: column; }
.l1 .lwrap { flex: 1; overflow: hidden; }
.l1 .sh { height: 15px; background: #f7f3f7; margin-bottom: 2px; }
.l1 .sh i { flex: 1; margin-right: 98px; }
.list td.ck { padding-left: 4px; }
.ck label { display: flex; gap: 5px; align-items: center; height: 15px; }
.a1 { width: 39px; } .a2, .a4 { width: 90px; } .a3 { width: 55px; } .a5 { width: 59px; } .a6 { width: 70px; }
.rlabel { line-height: 16px; padding: 5px 11px 1px; }
.l2 { height: 205px; margin: 0 10px 0 11px; box-shadow: inset 0 0 0 1px #fff, inset 1px 2px #636163; padding: 3px 3px 2px 2px; display: flex; }
.l2 .lwrap { flex: 1; min-width: 0; overflow: hidden; }
.l2 .sv { width: 16px; background: #f7f3f7; padding: 6px 0; gap: 5px; }
.picked td:not(:last-child) { background: #f7f3f7; }
.r1 { width: 36px; } .r2, .r8 { width: 110px; } .r3 { width: 40px; } .r4 { width: 76px; } .r5 { width: 100px; } .r6 { width: 52px; } .r7 { width: 102px; }
.opts { display: flex; align-items: center; height: 31px; padding: 2px 0 0 11px; white-space: nowrap; }
.opts label { display: flex; align-items: center; gap: 3px; }
.fq { margin-left: 6px; }
.opts input[type="text"] { width: 44px; height: 21px; margin: 0 6px 0 6px; padding: 0 3px; border: 1px solid #7a7a7a; background: #fff; font: 10px "DejaVu Sans Mono", monospace; }
.ms { margin-right: 13px; }
input[type="checkbox"] { appearance: none; flex: none; width: 13px; height: 13px; margin: 0; border: 1px solid #333; background: #fff; display: grid; place-items: center; }
input[type="checkbox"]:checked::before { content: ""; width: 8px; height: 4px; border: solid #333; border-width: 0 0 1px 1px; transform: rotate(-45deg); margin-bottom: 3px; }
</style>
